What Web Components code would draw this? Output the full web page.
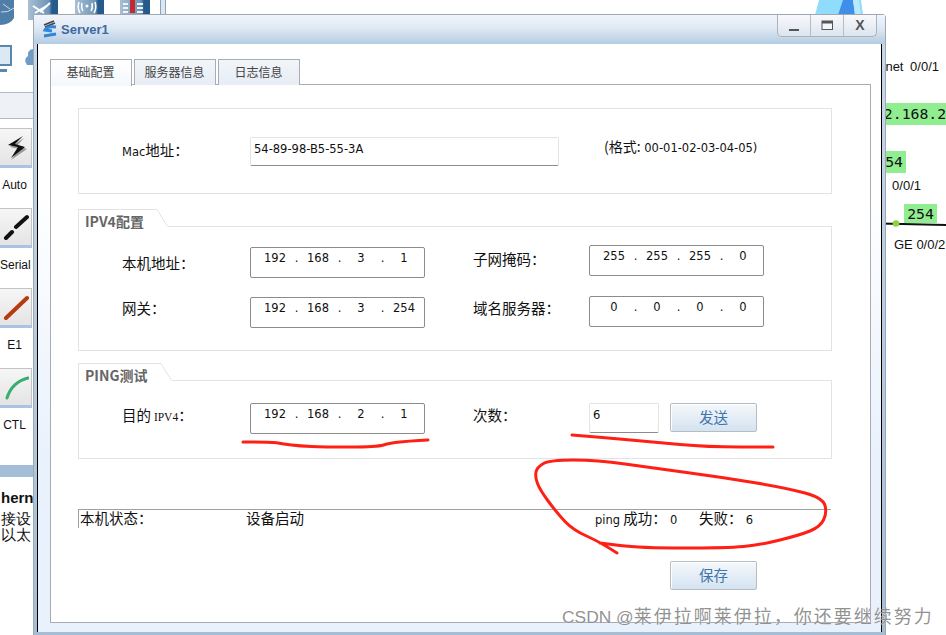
<!DOCTYPE html>
<html>
<head>
<meta charset="utf-8">
<title>Server1</title>
<style>
  html, body { margin: 0; padding: 0; background: #fff; overflow: hidden; }
  body { width: 946px; height: 635px; font-family: "Noto Sans CJK SC", "Liberation Sans", sans-serif; }
</style>
</head>
<body>
<template id="desktop-tpl">
  <style>
    :host { display: block; position: relative; width: 946px; height: 635px; overflow: hidden; background: #fff; }
    .win { position: absolute; left: 33px; top: 14px; }
    .ink { position: absolute; left: 0; top: 0; pointer-events: none; }
    .mark {
      position: absolute; left: 562px; top: 602px; white-space: nowrap;
      font-size: 18px; line-height: 26px; letter-spacing: 2px; color: rgba(120,120,120,.82);
      text-shadow: 0 0 1px #fff;
    }
    .mark b { font: 400 17.4px "Liberation Sans", sans-serif; letter-spacing: 0; }
  </style>
  <slot name="back"></slot>
  <div class="win"><slot></slot></div>
  <svg class="ink" width="946" height="635" fill="none" stroke="#ff2015" stroke-width="3" stroke-linecap="round" stroke-linejoin="round">
    <path data-pts="243,442 273,442 283,444 300,446 323,447 377,447 390,443 410,441 428,440"/>
    <path data-pts="572,435 597,437 653,442 707,447 773,447"/>
    <path data-pts="617,553 600,542 573,530 557,513 540,490 535,477 537,467 550,460 597,460 653,468 720,477 787,488 823,498 827,513 820,527 800,535 760,545 727,548 640,548 600,543"/>
  </svg>
  <div class="mark"><b>CSDN @</b>莱伊拉啊莱伊拉，你还要继续努力</div>
</template>

<template id="strip-tpl">
  <style>
    :host { display: block; position: absolute; left: 0; top: 0; width: 33px; height: 635px; font: 12px "Liberation Sans", sans-serif; color: #111; }
    .icons { height: 92px; }
    .band { height: 25px; background: #eef2f6; border-top: 1px solid #aebac6; border-bottom: 1px solid #aebac6; margin-bottom: 9px; }
    .bar { height: 12px; background: #a3bed6; margin-top: 17px; }
    .info { padding: 12px 0 0 1px; font-size: 14.5px; line-height: 16px; white-space: nowrap; overflow: hidden; }
    .info b { display: block; font: 700 15px/18px "Liberation Sans", sans-serif; margin-bottom: 4px; }
  </style>
  <div class="icons"></div>
  <div class="band"></div>
  <slot></slot>
  <div class="bar"></div>
  <div class="info"><b>hern</b>接设<br>以太</div>
</template>

<template id="tool-tpl">
  <style>
    :host { display: block; width: 33px; height: 80px; text-align: center; }
    .btn {
      width: 31px; height: 36px; display: flex; align-items: center; justify-content: center;
      background: linear-gradient(#f6f6f6, #e4e4e4); border: 1px solid #c4c4c4; border-bottom: 3px solid #a8c4e0; border-left: 0;
    }
    .txt { display: block; font: 12px/16px "Liberation Sans", sans-serif; padding-top: 9px; color: #111; width: 29px; white-space: nowrap; }
  </style>
  <div class="btn"><slot name="icon"></slot></div>
  <span class="txt"><slot></slot></span>
</template>

<template id="topo-tpl">
  <style>
    :host { display: block; position: absolute; white-space: nowrap; font: 13px/16px "Liberation Sans", sans-serif; color: #111; }
    :host([tag]) { font: 14.8px/22px "DejaVu Sans Mono", monospace; background: #90ee90; color: #111; padding: 0 3px; }
  </style><slot></slot></template>

<template id="window-tpl">
  <style>
    :host { display: block; width: 853px; height: 621px; box-sizing: border-box; border: 1px solid #9fa8b0; border-bottom: 0; border-radius: 4px 4px 0 0; background: linear-gradient(#c8d9ea, #a5bed5); }
    .bar { height: 29px; display: flex; background: linear-gradient(#f1f5fb, #dfe9f4 45%, #b4cce2); position: relative; }
    .logo { margin: 4px 0 0 7px; }
    .name { font: 700 13px/29px "Liberation Sans", sans-serif; color: #3e6aa0; padding-left: 2px; }
    .ctl {
      margin-left: auto; margin-right: 8px; height: 21px; display: flex;
      border: 1px solid #aab2ba; border-top: 0; border-radius: 0 0 5px 5px;
      background: linear-gradient(#f8f9fc, #dde4ee);
    }
    .ctl div { width: 32px; display: flex; align-items: center; justify-content: center; border-left: 1px solid #b6bcc4; color: #555; font: 700 14px/21px "Liberation Sans", sans-serif; }
    .ctl div:first-child { border-left: 0; }
    .body {
      height: 588px; margin: 0 3px; box-sizing: border-box;
      border-left: 1px solid #000; border-right: 1px solid #000;
      background: linear-gradient(#fff 0, #fff 25%, #e9f1fc 70%);
      padding: 15px 9px 0 12px;
    }
  </style>
  <div class="bar">
    <svg class="logo" width="18" height="19" viewBox="0 0 18 19">
      <path d="M3 6 L13 2 M4 8 L14 4" stroke="#444" stroke-width="1.800"/>
      <path d="M15 8 Q6 7 4 11 L11 12 M3 17 L15 15" stroke="#2f86d8" stroke-width="3" fill="none"/>
    </svg>
    <span class="name"><slot name="title"></slot></span>
    <div class="ctl">
      <div><svg width="12" height="12"><rect x="1" y="9" width="10" height="2" fill="#555"/></svg></div>
      <div><svg width="13" height="11"><rect x="1" y="1" width="10.5" height="8.5" fill="#f4f6f9" stroke="#555"/><rect x="1" y="1" width="10.5" height="2.5" fill="#555"/></svg></div>
      <div>X</div>
    </div>
  </div>
  <div class="body"><slot></slot></div>
</template>

<template id="tabs-tpl">
  <style>
    :host { display: block; width: 821px; }
    .tabs { display: flex; gap: 2px; height: 26px; position: relative; z-index: 1; }
    .tab {
      width: 79px; height: 25px; border: 1px solid #a8adb3; border-bottom: 0; text-align: center; color: #444;
      font-size: 12px; line-height: 23px; background: linear-gradient(#f2f5f9, #e6edf5); padding-right: 1px;
    }
    .tab.on { height: 26px; background: linear-gradient(#fff, #f3f8fc); }
    .frame { height: 539px; box-sizing: border-box; border: 1px solid #a8adb3; padding: 23px 0 0 27px; background: #fff; margin-top: -1px; }
  </style>
  <div class="tabs">
    <div class="tab on">基础配置</div><div class="tab">服务器信息</div><div class="tab">日志信息</div>
  </div>
  <div class="frame"><slot></slot></div>
</template>

<template id="group-tpl">
  <style>
    :host { display: block; width: 754px; font-size: 14.5px; color: #111; }
    .head { display: none; height: 18px; }
    :host([heading]) .head { display: flex; }
    .ttl {
      width: var(--ttl, 77px); box-sizing: border-box; border: 1px solid #e3e3e3; border-width: 1px 0 0 1px;
      padding-left: 6px; font-weight: 700; font-size: 14px; line-height: 22px; color: #666; white-space: nowrap;
    }
    .rest { flex: 1; border-bottom: 1px solid #e3e3e3; }
    .box { box-sizing: border-box; height: var(--h); border: 1px solid #e3e3e3; padding: var(--pad, 0) 0 0 43px; }
    :host([heading]) .box { border-top: 0; }
    svg { display: block; flex: none; }
  </style>
  <div class="head">
    <div class="ttl" id="t"></div>
    <svg width="12" height="18"><path d="M0 .5 L1 .5 L11.5 17.5" fill="none" stroke="#e3e3e3"/></svg>
    <div class="rest"></div>
  </div>
  <div class="box"><slot></slot></div>
</template>

<template id="row-tpl">
  <style>
    :host { display: flex; align-items: flex-start; }
    ::slotted(*) { flex: none; }
  </style>
  <slot></slot>
</template>

<template id="label-tpl">
  <style>
    :host { display: block; line-height: 20px; white-space: nowrap; width: var(--w, 128px); }
  </style><slot></slot></template>

<template id="lat-tpl">
  <style>:host { font: 11.5px "DejaVu Sans", sans-serif; }</style><slot></slot></template>

<template id="ip-tpl">
  <style>
    :host { display: block; width: 175px; height: 31px; box-sizing: border-box; border: 1px solid #8c8c8c; border-radius: 2px; background: #fff; }
    .in { display: grid; grid-template-columns: 32px 11px 32px 11px 32px 11px 32px; padding-left: 8px; font: 11.5px/20px "DejaVu Sans", sans-serif; color: #111; text-align: center; }
  </style>
  <div class="in" id="o"></div>
</template>

<template id="text-tpl">
  <style>
    :host { display: block; box-sizing: border-box; border: 1px solid #e4e4e4; border-bottom-color: #8c8c8c; border-radius: 2px; background: #fff; font: 11.5px/20px "DejaVu Sans", sans-serif; color: #111; padding: 1px 3px; }
  </style><slot></slot></template>

<template id="btn-tpl">
  <style>
    :host { display: block; width: 87px; height: 29px; box-sizing: border-box; border: 1px solid #b6bcc4; border-radius: 2px; background: linear-gradient(#f5f8fb, #d4e3f1); color: #3f74ad; font-size: 14.5px; line-height: 25px; text-align: center; box-shadow: inset 1px 1px 0 #fff; }
  </style><slot></slot></template>

<template id="status-tpl">
  <style>
    :host { display: flex; width: 753px; height: 19px; box-sizing: border-box; border-top: 1px solid #a0a0a0; border-left: 1px solid #a0a0a0; font-size: 14.5px; line-height: 16px; color: #111; white-space: nowrap; }
    .a { width: 167px; padding-left: 1px; box-sizing: border-box; }
    .b { width: 349px; }
    .c { width: 104px; }
  </style>
  <div class="a"><slot name="a"></slot></div>
  <div class="b"><slot name="b"></slot></div>
  <div class="c"><slot name="c"></slot></div>
  <div><slot name="d"></slot></div>
</template>

<sim-desktop>
  <tool-strip slot="back">
    <tool-cell>
      <svg slot="icon" width="26" height="28" viewBox="0 0 26 28"><path d="M20 4 L6 13 L15 15 L7 26 L23 15 L13 12 Z" fill="#999" transform="translate(1 1)"/><path d="M20 3 L5 12 L15 14 L8 25 L22 14 L12 11 Z" fill="#111"/></svg>Auto
    </tool-cell>
    <tool-cell>
      <svg slot="icon" width="26" height="26" viewBox="0 0 26 26"><path d="M3 24 L9 18 M13 13 L24 3" stroke="#111" stroke-width="4" stroke-linecap="round"/></svg>Serial
    </tool-cell>
    <tool-cell>
      <svg slot="icon" width="26" height="26" viewBox="0 0 26 26"><path d="M3 24 L24 4" stroke="#b83a10" stroke-width="4" stroke-linecap="round"/></svg>E1
    </tool-cell>
    <tool-cell>
      <svg slot="icon" width="26" height="26" viewBox="0 0 26 26"><path d="M4 24 Q9 8 25 4" fill="none" stroke="#3cad6f" stroke-width="3" stroke-linecap="round"/></svg>CTL
    </tool-cell>
  </tool-strip>

  <svg slot="back" style="position:absolute;left:0;top:0" width="170" height="80" viewBox="0 0 170 80">
    <defs><linearGradient id="dev" x1="0" x2="1" y1="0" y2="0"><stop offset="0" stop-color="#a9bfd3"/><stop offset=".7" stop-color="#6d95b8"/><stop offset=".8" stop-color="#245a8c"/><stop offset="1" stop-color="#245a8c"/></linearGradient></defs>
    <path d="M0 0 H14 V18 Q10 25 0 25 Z" fill="#4f7fa8"/><path d="M1 12 Q8 13 14 8 M3 4 L10 9" stroke="#c8d8e6" fill="none"/>
    <rect x="28" y="0" width="30" height="20" fill="url(#dev)"/><path d="M33 6 L44 13 M50 3 L40 12 M35 13 L48 5" stroke="#fff" stroke-width="2" fill="none"/>
    <rect x="75" y="0" width="29" height="15" fill="url(#dev)"/><path d="M79 2 Q77 8 80 13 M95 2 Q97 8 94 13 M82 3 Q81 8 83 11 M92 3 Q93 8 91 11" stroke="#fff" stroke-width="1.500" fill="none"/><circle cx="87" cy="6" r="1.500" fill="#fff"/>
    <rect x="120" y="0" width="30" height="15" fill="url(#dev)"/><rect x="130" y="0" width="5" height="13" fill="#c22a30"/><path d="M123 4 H128 M123 8 H128 M123 12 H128 M137 4 H143 M137 8 H143 M137 12 H143" stroke="#eef3f7" stroke-width="2"/>
    <rect x="160.500" y="-1" width="5" height="16" fill="#dbe6f0" stroke="#8aa4bc"/>
    <path d="M0 46 H11 V65 H0" fill="#dbe9f5" stroke="#5a88ad" stroke-width="2"/><rect x="0" y="69" width="7" height="3" fill="#5a88ad"/>
    <path d="M33 49 Q27 50 28 56 Q23 59 27 65 H33 Z" fill="#6f9cc2"/>
  </svg>
  <svg slot="back" style="position:absolute;left:813px;top:0" width="52" height="15" viewBox="0 0 52 15">
    <path d="M2 15 L6 0 H48 L50 15 Z" fill="#8fdcfc"/><path d="M25 15 L30 0 H40 L42 15 Z" fill="#3f8ee8"/><path d="M40 0 H46 L48 15 H42 Z" fill="#b8e8fc"/>
  </svg>
  <topo-label slot="back" style="right:7px;top:59px;word-spacing:3px">Ethernet 0/0/1</topo-label>
  <topo-label slot="back" tag style="left:863px;top:103px;width:80px;padding-right:0">192.168.2</topo-label>
  <topo-label slot="back" tag style="left:859px;top:151px;width:41px;text-align:right">254</topo-label>
  <topo-label slot="back" style="right:25px;top:178px;word-spacing:3px">GE 0/0/1</topo-label>
  <svg slot="back" style="position:absolute;left:880px;top:218px" width="66" height="12"><path d="M0 5.500 L66 7" stroke="#111" stroke-width="2"/><circle cx="16" cy="5.500" r="3.300" fill="#8fd13f"/></svg>
  <topo-label slot="back" tag style="left:904px;top:204px;width:27px;text-align:center;line-height:19px">254</topo-label>
  <topo-label slot="back" style="left:894px;top:237px">GE 0/0/2</topo-label>

  <sim-window>
    <span slot="title">Server1</span>
    <tab-frame>
      <group-box style="--h:86px;--pad:28px">
        <form-row>
          <field-label style="margin-top:3px"><lat-text>Mac</lat-text>地址：</field-label>
          <text-field style="width:309px;height:29px;padding-top:1px">54-89-98-B5-55-3A</text-field>
          <field-label style="margin:-1px 0 0 45px;--w:auto;font-size:14px"><span>(格式:</span><lat-text>00-01-02-03-04-05)</lat-text></field-label>
        </form-row>
      </group-box>

      <group-box heading="IPV4配置" style="--h:124px;--pad:18px;margin-top:15px;--ttl:78px">
        <form-row>
          <field-label style="margin-top:8px">本机地址：</field-label>
          <ip-field value="192.168.3.1" style="margin-top:2px"></ip-field>
          <field-label style="margin:4px 0 0 48px;--w:116px">子网掩码：</field-label>
          <ip-field value="255.255.255.0"></ip-field>
        </form-row>
        <form-row style="margin-top:18px">
          <field-label style="margin-top:2px">网关：</field-label>
          <ip-field value="192.168.3.254" style="margin-top:1px"></ip-field>
          <field-label style="margin:2px 0 0 48px;--w:116px">域名服务器：</field-label>
          <ip-field value="0.0.0.0"></ip-field>
        </form-row>
      </group-box>

      <group-box heading="PING测试" style="--h:78px;--pad:22px;margin-top:12px;--ttl:82px">
        <form-row>
          <field-label style="margin-top:2px">目的<lat-text style="font:11.5px 'Liberation Serif',serif">IPV4</lat-text>：</field-label>
          <ip-field value="192.168.2.1"></ip-field>
          <field-label style="margin:2px 0 0 48px;--w:116px">次数：</field-label>
          <text-field style="width:70px;height:30px">6</text-field>
          <sim-button style="margin-left:11px">发送</sim-button>
        </form-row>
      </group-box>

      <status-row style="margin-top:50px">
        <span slot="a">本机状态：</span>
        <span slot="b">设备启动</span>
        <span slot="c"><lat-text>ping</lat-text> 成功： <lat-text>0</lat-text></span>
        <span slot="d">失败： <lat-text>6</lat-text></span>
      </status-row>

      <sim-button style="margin:33px 0 0 592px">保存</sim-button>
    </tab-frame>
  </sim-window>
</sim-desktop>

<script>
function plain(name, tplId) {
  customElements.define(name, class extends HTMLElement {
    constructor() {
      super();
      this.attachShadow({mode: 'open'}).appendChild(document.getElementById(tplId).content.cloneNode(true));
    }
  });
}
plain('tool-strip', 'strip-tpl');
plain('tool-cell', 'tool-tpl');
plain('topo-label', 'topo-tpl');
plain('sim-window', 'window-tpl');
plain('tab-frame', 'tabs-tpl');
plain('form-row', 'row-tpl');
plain('field-label', 'label-tpl');
plain('lat-text', 'lat-tpl');
plain('text-field', 'text-tpl');
plain('sim-button', 'btn-tpl');
plain('status-row', 'status-tpl');

// hand drawn strokes: smooth the points through their midpoints
class SimDesktop extends HTMLElement {
  constructor() {
    super();
    this.attachShadow({mode: 'open'}).appendChild(document.getElementById('desktop-tpl').content.cloneNode(true));
    this.shadowRoot.querySelectorAll('path[data-pts]').forEach(p => {
      const pts = p.dataset.pts.split(' ').map(s => s.split(',').map(Number));
      let d = 'M' + pts[0];
      for (let i = 1; i < pts.length - 1; i++) {
        const mx = (pts[i][0] + pts[i + 1][0]) / 2;
        const my = (pts[i][1] + pts[i + 1][1]) / 2;
        d += ' Q' + pts[i] + ' ' + mx + ',' + my;
      }
      d += ' L' + pts[pts.length - 1];
      p.setAttribute('d', d);
    });
  }
}
customElements.define('sim-desktop', SimDesktop);

class GroupBox extends HTMLElement {
  constructor() {
    super();
    this.attachShadow({mode: 'open'}).appendChild(document.getElementById('group-tpl').content.cloneNode(true));
  }
  connectedCallback() {
    this.shadowRoot.getElementById('t').textContent = this.getAttribute('heading') || '';
  }
}
customElements.define('group-box', GroupBox);

class IpField extends HTMLElement {
  constructor() {
    super();
    this.attachShadow({mode: 'open'}).appendChild(document.getElementById('ip-tpl').content.cloneNode(true));
  }
  connectedCallback() {
    const box = this.shadowRoot.getElementById('o');
    const parts = (this.getAttribute('value') || '').split('.');
    parts.forEach((p, i) => {
      const s = document.createElement('span');
      s.textContent = p;
      box.appendChild(s);
      if (i < parts.length - 1) {
        const d = document.createElement('span');
        d.textContent = '.';
        box.appendChild(d);
      }
    });
  }
}
customElements.define('ip-field', IpField);
</script>
</body>
</html>
